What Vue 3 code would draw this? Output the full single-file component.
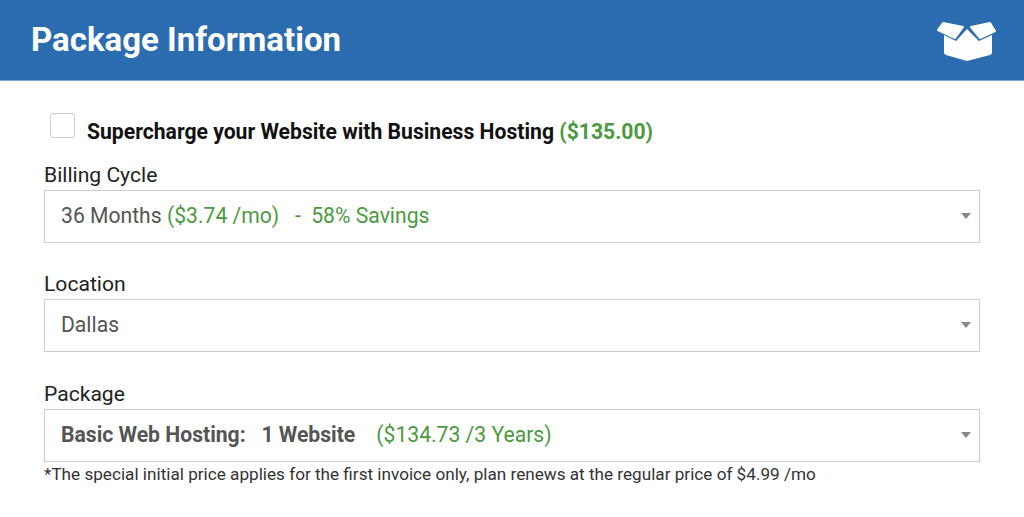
<template>
  <div class="panel">
    <header class="head">
      <h1>Package Information</h1>
      <svg class="box" viewBox="0 0 60 42" width="60" height="42">
        <path d="M7 3 L27 7 L19 18 L2 10 Z M54 3 L35 7 L44 18 L59 11 Z" fill="#fff" stroke="#fff" stroke-width="2" stroke-linejoin="round" />
        <path d="M8 15 L20 21 L31 9 L43 21 L56 15 L56 33 Q56 34 54 35 L31 41 L10 35 Q8 34 8 33 Z" fill="#fff" />
      </svg>
    </header>

    <div class="body">
      <div class="upsell">
        <span class="check"></span>
        <span class="upsell-text">Supercharge your Website with Business Hosting <em>($135.00)</em></span>
      </div>

      <div v-for="field in fields" :key="field.label" class="field">
        <label>{{ field.label }}</label>
        <div class="select">
          <span v-html="field.value"></span>
          <i class="arrow"></i>
        </div>
      </div>

      <p class="note">*The special initial price applies for the first invoice only, plan renews at the regular price of $4.99 /mo</p>
    </div>
  </div>
</template>

<script setup>
const fields = [
  {
    label: 'Billing Cycle',
    value: '36 Months <span style="color:#4c9a3f">($3.74 /mo) &nbsp; - &nbsp;58% Savings</span>',
  },
  { label: 'Location', value: 'Dallas' },
  {
    label: 'Package',
    value:
      '<b>Basic Web Hosting: &nbsp; 1 Website</b> &nbsp; &nbsp;<span style="color:#4c9a3f">($134.73 /3 Years)</span>',
  },
]
</script>

<style>
body {
  background: #fff;
}
</style>

<style scoped>
.panel {
  font-family: Roboto, 'Liberation Sans', sans-serif;
  width: 1024px;
  height: 517px;
  overflow: hidden;
}

.head {
  height: 81px;
  background: #2b6cb0;
  border-bottom: 1px solid #7fa6d2;
  box-sizing: border-box;
  display: flex;
  align-items: center;
  justify-content: space-between;
  padding: 0 28px 0 31px;
}

.head h1 {
  margin: -2px 0 0;
  color: #fff;
  font-size: 33px;
  font-weight: 700;
}

.box {
  margin-top: 1px;
}

.body {
  padding: 31px 44px 0;
}

.upsell {
  display: flex;
  align-items: flex-start;
  height: 50px;
  padding-left: 6px;
}

.check {
  width: 23px;
  height: 23px;
  border: 1px solid #ccc;
  border-radius: 3px;
  background: #fff;
  margin-top: 1px;
}

.upsell-text {
  margin: 8px 0 0 12px;
  font-size: 21.150px;
  font-weight: 700;
  color: #111;
  line-height: 24px;
}

.upsell-text em {
  font-style: normal;
  color: #4c9a3f;
}

.field {
  margin-bottom: 28.400px;
}

.field:last-of-type {
  margin-bottom: 0;
}

.field label {
  display: block;
  font-size: 21.100px;
  line-height: 26px;
  color: #222;
  margin-bottom: 2px;
}

.select {
  position: relative;
  height: 53px;
  box-sizing: border-box;
  border: 1px solid #ccc;
  padding: 0 16px 2px;
  display: flex;
  align-items: center;
  font-size: 21.150px;
  color: #555;
}

.arrow {
  position: absolute;
  right: 8px;
  top: 22px;
  border-left: 5px solid transparent;
  border-right: 5px solid transparent;
  border-top: 6px solid #888;
}

.note {
  margin: 1px 0 0;
  font-size: 17.150px;
  line-height: 22px;
  color: #333;
}
</style>
